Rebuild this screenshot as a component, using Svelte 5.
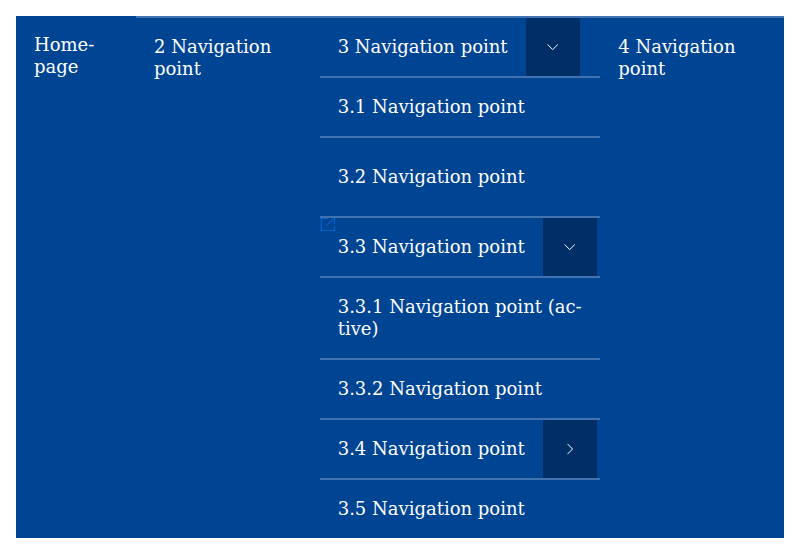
<script>
  const items = [
    { label: '3 Navigation point', height: 60, toggle: 'down' },
    { label: '3.1 Navigation point', height: 60 },
    { label: '3.2 Navigation point', height: 80 },
    { label: '3.3 Navigation point', height: 60, toggle: 'down', external: true },
    { label: '3.3.1 Navigation point (ac-\ntive)', height: 82 },
    { label: '3.3.2 Navigation point', height: 60 },
    { label: '3.4 Navigation point', height: 60, toggle: 'right' },
    { label: '3.5 Navigation point', height: 60 }
  ];
</script>

<nav>
  <a class="home" href="#home">Home-<br />page</a>
  <a class="point" href="#2">2 Navigation<br />point</a>
  <ul>
    {#each items as item}
      <li style:height="{item.height}px">
        {#if item.external}
          <svg class="external" width="16" height="14" viewBox="0 0 16 14" aria-hidden="true">
            <path d="M8 .5H1.200v12h13.300V9M14.500 6V0M6.500 7.500l8-7.500" />
          </svg>
        {/if}
        <a href="#item">{item.label}</a>
        {#if item.toggle}
          <button aria-label="Toggle submenu">
            <svg width="12" height="12" viewBox="0 0 12 12">
              <path d={item.toggle === 'down' ? 'M.6 3.500l5.100 5.100 5.100-5.100' : 'M3.500.9l5.100 5.100-5.100 5.100'} />
            </svg>
          </button>
        {/if}
      </li>
    {/each}
  </ul>
  <a class="point last" href="#4">4 Navigation<br />point</a>
</nav>

<style>
  nav {
    display: flex;
    margin: 16px;
    height: 522px;
    background: #004494;
    font: 18px/22px "DejaVu Serif", serif;
  }
  a { color: #fff; text-decoration: none; white-space: pre; }
  .home { box-sizing: border-box; width: 120px; padding: 18px; }
  .point { box-sizing: border-box; width: 184px; padding: 18px; border-top: 2px solid #4073af; }
  .last { padding-left: 18.3px; }
  ul { width: 280px; margin: 0; padding: 0; list-style: none; }
  li { position: relative; box-sizing: border-box; display: flex; align-items: stretch; border-top: 2px solid #4073af; }
  li a { align-self: center; padding: 0 18px 0 17.700px; }
  button { display: flex; align-items: center; justify-content: center; width: 54px; padding: 0; border: 0; background: #002f67; }
  svg { fill: none; stroke: #fff; stroke-width: 1; }
  .external { position: absolute; left: 0; top: 0; stroke: #0065d2; stroke-width: 1.100; }
</style>
